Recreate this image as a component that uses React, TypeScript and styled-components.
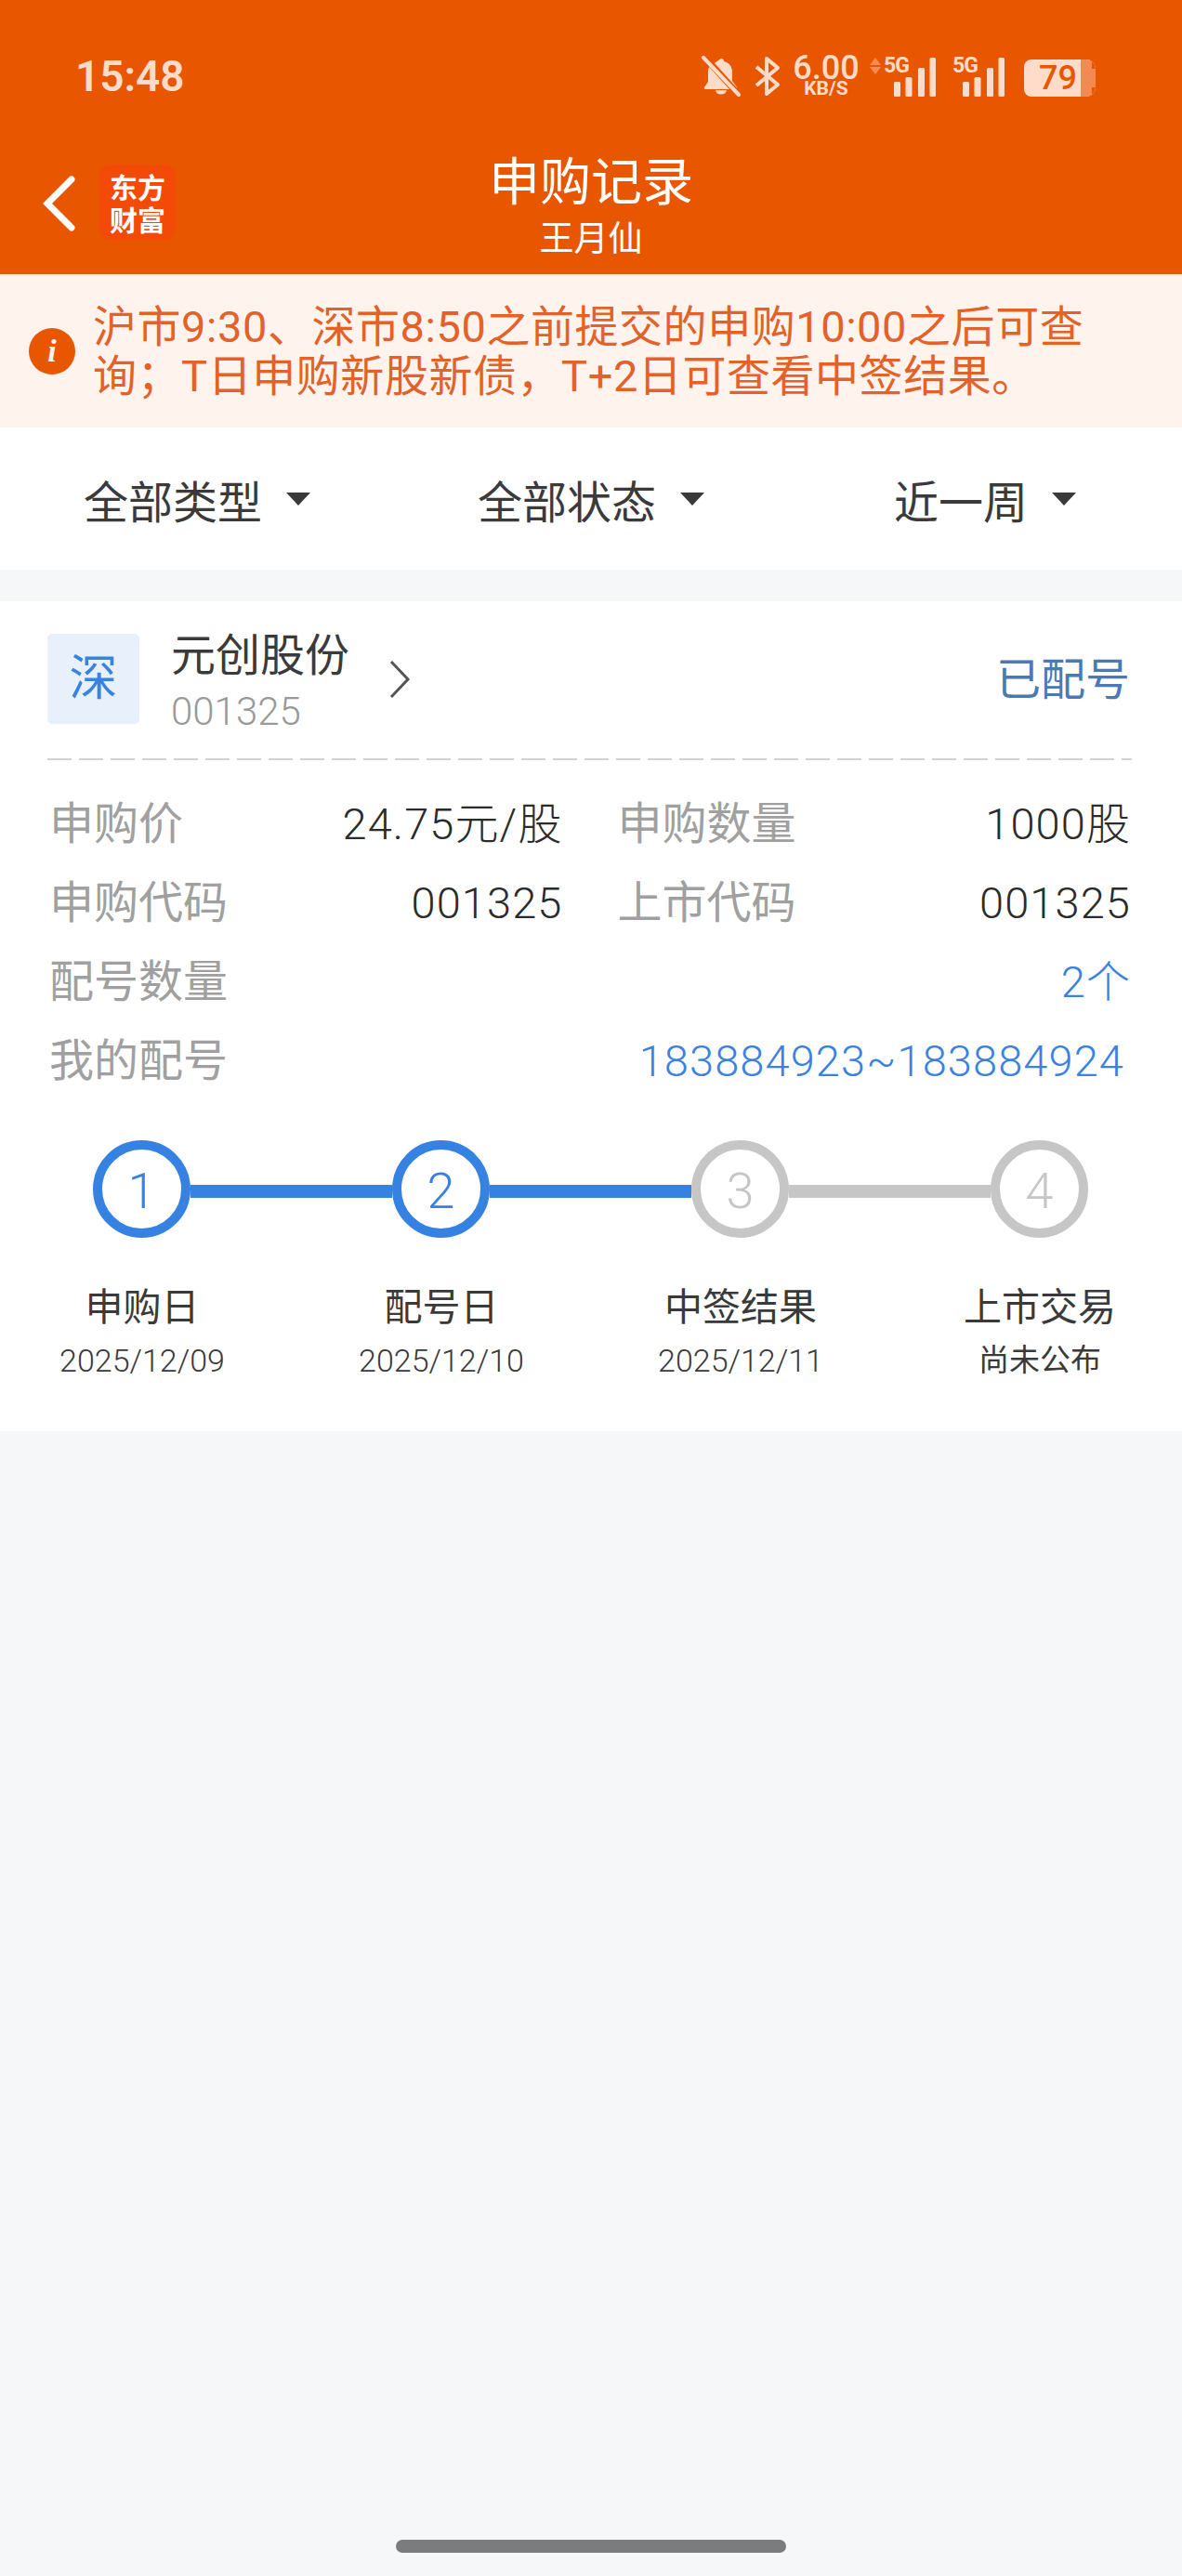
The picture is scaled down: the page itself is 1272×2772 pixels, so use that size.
import React from "react";
import styled, { createGlobalStyle } from "styled-components";

const Global = createGlobalStyle`
  html, body { margin: 0; padding: 0; background: #f6f7f9; }
  * { box-sizing: border-box; }
  body { font-family: Roboto, "Noto Sans CJK SC", sans-serif; font-weight: 400; }
`;

const Page = styled.div`
  width: 1272px;
  height: 2772px;
  display: flex;
  flex-direction: column;
  background: #f6f7f9;
  overflow: hidden;
`;

const Header = styled.header`
  height: 295px;
  background: #e85600;
  flex: none;
`;

const StatusBar = styled.div`
  height: 165px;
  padding: 60px 93px 0 81px;
  display: flex;
  justify-content: space-between;
  align-items: flex-start;
  color: #ffdcc9;
`;

const Time = styled.div`
  font: 600 46px/44px Roboto, sans-serif;
`;

const StatusIcons = styled.div`
  display: flex;
  align-items: flex-start;
  height: 46px;
`;

const Speed = styled.div`
  width: 74px;
  margin: 0 10px 0 12px;
  text-align: center;
  font-family: Roboto, sans-serif;
  font-weight: 500;
`;

const SpeedValue = styled.div`
  font-size: 36px;
  line-height: 27px;
`;

const SpeedUnit = styled.div`
  font-size: 21px;
  line-height: 17px;
  font-weight: 700;
`;

const Signal = styled.div`
  position: relative;
  width: 57px;
  height: 44px;
  margin-right: ${(p: { $gap: number }) => p.$gap}px;
`;

const SignalTag = styled.span`
  position: absolute;
  left: 0;
  top: 1px;
  font: 700 23px/20px Roboto, sans-serif;
  letter-spacing: -1px;
`;

const Battery = styled.div`
  position: relative;
  width: 77px;
  height: 40px;
  margin-top: 4px;
  background: #ffdcc9;
  border-radius: 8px 10px 10px 8px;
  overflow: hidden;
  color: #e85600;
  font: 500 36px/40px Roboto, sans-serif;
  padding-left: 16px;
`;

const BatteryRest = styled.div`
  position: absolute;
  right: 4px;
  top: 0;
  bottom: 0;
  width: 12px;
  background: #f38a52;
`;

const BatteryTip = styled.div`
  position: absolute;
  right: 0;
  top: 10px;
  bottom: 10px;
  width: 4px;
  background: #f38a52;
`;

const BatteryCut = styled.div`
  position: absolute;
  right: 0;
  top: 0;
  width: 4px;
  height: 10px;
  background: #e85600;
  box-shadow: 0 30px 0 #e85600;
`;

const Nav = styled.div`
  position: relative;
  height: 130px;
  display: flex;
  align-items: flex-start;
  padding: 12px 0 0 44px;
`;

const BackIcon = styled.svg`
  margin-top: 12px;
`;

const Logo = styled.div`
  width: 82px;
  height: 81px;
  margin: 0 0 0 23px;
  border-radius: 13px;
  background: #f44a08;
  color: #fff;
  font: 700 30px/35px "Noto Sans CJK SC", sans-serif;
  text-align: center;
  padding-top: 6px;
`;

const NavTitle = styled.div`
  position: absolute;
  left: 436px;
  width: 400px;
  top: 3px;
  text-align: center;
  color: #fff;
`;

const Title = styled.div`
  font-size: 55px;
  line-height: 56px;
`;

const Subtitle = styled.div`
  font-size: 37px;
  line-height: 40px;
  margin-top: 14px;
`;

const Notice = styled.div`
  height: 165px;
  flex: none;
  background: #fff3ee;
  padding: 0 0 0 31px;
  display: flex;
  align-items: center;
  gap: 19px;
`;

const InfoDot = styled.div`
  flex: none;
  width: 50px;
  height: 50px;
  border-radius: 50%;
  background: #e85600;
  color: #fff3ee;
  font: italic 700 34px/50px "Liberation Serif", serif;
  text-align: center;
`;

const NoticeText = styled.div`
  width: 1100px;
  color: #e2622a;
  font-size: 47px;
  letter-spacing: 0.55px;
  line-height: 53px;
`;

const Filters = styled.div`
  height: 153px;
  flex: none;
  background: #fff;
  display: grid;
  grid-template-columns: repeat(3, 1fr);
  align-items: center;
`;

const Filter = styled.div`
  display: flex;
  justify-content: center;
  align-items: center;
  gap: 26px;
  color: #3a3a3a;
  font-size: 48px;
`;

const Caret = styled.span`
  width: 0;
  height: 0;
  border-left: 13px solid transparent;
  border-right: 13px solid transparent;
  border-top: 14px solid #3a3a3a;
`;

const Card = styled.section`
  margin-top: 34px;
  height: 893px;
  flex: none;
  background: #fff;
`;

const CardHead = styled.div`
  margin: 0 54px 0 51px;
  height: 171px;
  padding-top: 35px;
  display: flex;
  align-items: flex-start;
  background-image: linear-gradient(to right, #d2d2d2 76%, transparent 76%);
  background-size: 34px 2px;
  background-repeat: repeat-x;
  background-position: left bottom;
`;

const Badge = styled.div`
  width: 99px;
  height: 97px;
  border-radius: 5px;
  background: #e8f1fb;
  color: #3a82e0;
  font-size: 52px;
  line-height: 97px;
  text-align: center;
`;

const StockInfo = styled.div`
  margin-left: 34px;
`;

const StockName = styled.div`
  color: #3a3a3a;
  font-size: 48px;
  line-height: 60px;
  margin-top: -6px;
`;

const StockCode = styled.div`
  color: #999;
  font-size: 42px;
  font-weight: 300;
  line-height: 50px;
  margin-top: 5px;
`;

const Chevron = styled.svg`
  margin: 28px 0 0 42px;
`;

const StateText = styled.div`
  margin-left: auto;
  margin-right: 2px;
  margin-top: 20px;
  color: #4b79b3;
  font-size: 48px;
  line-height: 60px;
`;

const Rows = styled.div`
  padding: 26px 56px 0 53px;
`;

const PairRow = styled.div`
  display: grid;
  grid-template-columns: 1fr 1fr;
  column-gap: 60px;
  height: 85px;
`;

const Pair = styled.div`
  display: flex;
  justify-content: space-between;
  align-items: baseline;
  height: 85px;
  line-height: 85px;
`;

const Label = styled.span`
  color: #a0a0a0;
  font-size: 48px;
`;

const Value = styled.span<{ $blue?: boolean; $inset?: number }>`
  color: ${(p) => (p.$blue ? "#3a82e0" : "#2b2b2b")};
  font-size: 47px;
  font-weight: 300;
  letter-spacing: 1.1px;
  margin-right: ${(p) => p.$inset ?? -1}px;
`;

const Track = styled.div`
  margin-top: 43px;
  padding: 0 100px;
  display: flex;
  align-items: center;
`;

const Dot = styled.div<{ $on: boolean }>`
  flex: none;
  width: 105px;
  height: 105px;
  border-radius: 50%;
  border: 10px solid ${(p) => (p.$on ? "#3682e2" : "#c6c6c6")};
  color: ${(p) => (p.$on ? "#3682e2" : "#c6c6c6")};
  font-size: 54px;
  font-weight: 300;
  line-height: 90px;
  text-align: center;
`;

const Connector = styled.div<{ $on: boolean }>`
  width: 217px;
  height: 14px;
  margin-top: 5px;
  background: ${(p) => (p.$on ? "#3682e2" : "#c6c6c6")};
`;

const StepGrid = styled.div`
  display: grid;
  grid-template-columns: repeat(4, 322px);
  justify-content: center;
  margin-top: 50px;
`;

const Step = styled.div`
  text-align: center;
  color: #3a3a3a;
`;

const StepName = styled.div`
  font-size: 41px;
  line-height: 50px;
`;

const StepDate = styled.div<{ $small?: boolean }>`
  font-size: ${(p) => (p.$small ? 33 : 34)}px;
  font-weight: ${(p) => (p.$small ? 400 : 300)};
  line-height: 46px;
  margin-top: 9px;
`;

const HomeBar = styled.div`
  margin: auto 0 25px 426px;
  width: 420px;
  height: 14px;
  border-radius: 7px;
  background: #7b7c7e;
`;

const SignalBars = () => (
  <svg width="46" height="42" viewBox="0 0 46 42" style={{ position: "absolute", left: 11, top: 2 }}>
    <g fill="currentColor">
      <rect x="0" y="26" width="7" height="16" rx="1.500" />
      <rect x="12.500" y="21" width="7" height="21" rx="1.500" />
      <rect x="26" y="11" width="7" height="31" rx="1.500" />
      <rect x="38.500" y="0" width="6.500" height="42" rx="1.500" />
    </g>
  </svg>
);

const steps = [
  { name: "申购日", date: "2025/12/09", on: true },
  { name: "配号日", date: "2025/12/10", on: true },
  { name: "中签结果", date: "2025/12/11", on: false },
  { name: "上市交易", date: "尚未公布", on: false, small: true },
];

export default function App() {
  return (
    <Page>
      <Global />
      <Header>
        <StatusBar>
          <Time>15:48</Time>
          <StatusIcons>
            <svg width="42" height="44" viewBox="0 0 42 44" style={{ marginRight: 15 }}>
              <path
                fill="currentColor"
                d="M21 3c2 0 3 1 3 3 6 1.500 9 6 9 12v9l5 7c.6 1 0 2-1 2H4c-1 0-1.600-1-1-2l4-6V17c0-2 .6-4 1.600-5.500ZM15 37h12c-.5 3-3 4.500-6 4.500S15.500 40 15 37Z"
              />
              <path d="M3 1 41 43" stroke="#e85600" strokeWidth="7" />
              <path d="M2 2 40 42" stroke="currentColor" strokeWidth="4" strokeLinecap="round" />
            </svg>
            <svg width="28" height="44" viewBox="0 0 28 44">
              <path
                fill="none"
                stroke="currentColor"
                strokeWidth="4"
                strokeLinejoin="round"
                d="M2 12 25 31 13 41V3l12 10L2 32"
              />
            </svg>
            <Speed>
              <SpeedValue>6.00</SpeedValue>
              <SpeedUnit>KB/S</SpeedUnit>
            </Speed>
            <svg width="12" height="18" viewBox="0 0 12 18" style={{ marginTop: 2, marginRight: 3 }}>
              <path fill="#f58c57" d="M6 0 12 8H0ZM0 10H12L6 18Z" />
            </svg>
            <Signal $gap={17}>
              <SignalBars />
              <SignalTag>5G</SignalTag>
            </Signal>
            <Signal $gap={20}>
              <SignalBars />
              <SignalTag>5G</SignalTag>
            </Signal>
            <Battery>
              79
              <BatteryRest />
              <BatteryTip />
              <BatteryCut />
            </Battery>
          </StatusIcons>
        </StatusBar>
        <Nav>
          <BackIcon width="40" height="60" viewBox="0 0 40 60">
            <path d="M33 4 7 30l26 26" fill="none" stroke="#fff" strokeWidth="7" strokeLinecap="round" />
          </BackIcon>
          <Logo>
            东方
            <br />
            财富
          </Logo>
          <NavTitle>
            <Title>申购记录</Title>
            <Subtitle>王月仙</Subtitle>
          </NavTitle>
        </Nav>
      </Header>
      <Notice>
        <InfoDot>i</InfoDot>
        <NoticeText>沪市9:30、深市8:50之前提交的申购10:00之后可查询；T日申购新股新债，T+2日可查看中签结果。</NoticeText>
      </Notice>
      <Filters>
        <Filter>
          全部类型
          <Caret />
        </Filter>
        <Filter>
          全部状态
          <Caret />
        </Filter>
        <Filter>
          近一周
          <Caret />
        </Filter>
      </Filters>
      <Card>
        <CardHead>
          <Badge>深</Badge>
          <StockInfo>
            <StockName>元创股份</StockName>
            <StockCode>001325</StockCode>
          </StockInfo>
          <Chevron width="24" height="42" viewBox="0 0 24 42">
            <path d="M3 2 21 21 3 40" fill="none" stroke="#555" strokeWidth="3" />
          </Chevron>
          <StateText>已配号</StateText>
        </CardHead>
        <Rows>
          <PairRow>
            <Pair>
              <Label>申购价</Label>
              <Value>24.75元/股</Value>
            </Pair>
            <Pair>
              <Label>申购数量</Label>
              <Value>1000股</Value>
            </Pair>
          </PairRow>
          <PairRow>
            <Pair>
              <Label>申购代码</Label>
              <Value>001325</Value>
            </Pair>
            <Pair>
              <Label>上市代码</Label>
              <Value>001325</Value>
            </Pair>
          </PairRow>
          <Pair>
            <Label>配号数量</Label>
            <Value $blue>2个</Value>
          </Pair>
          <Pair>
            <Label>我的配号</Label>
            <Value $blue $inset={6}>183884923~183884924</Value>
          </Pair>
        </Rows>
        <Track>
          {steps.map((s, i) => (
            <React.Fragment key={s.name}>
              <Dot $on={s.on}>{i + 1}</Dot>
              {i < 3 && <Connector $on={i < 2} />}
            </React.Fragment>
          ))}
        </Track>
        <StepGrid>
          {steps.map((s) => (
            <Step key={s.name}>
              <StepName>{s.name}</StepName>
              <StepDate $small={s.small}>{s.date}</StepDate>
            </Step>
          ))}
        </StepGrid>
      </Card>
      <HomeBar />
    </Page>
  );
}
